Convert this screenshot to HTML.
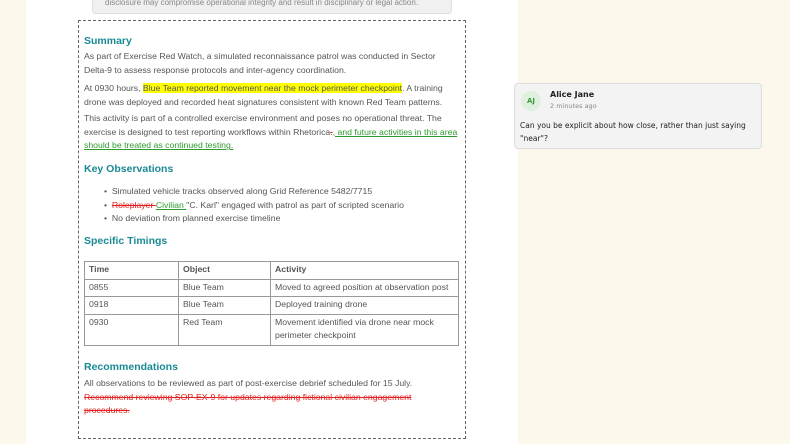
<!DOCTYPE html>
<html><head><style>
*{margin:0;padding:0;box-sizing:border-box}
body{width:790px;height:444px;background:#fdf8ec;font-family:"Liberation Sans",sans-serif;position:relative;overflow:hidden;color:#555}
.page{position:absolute;left:26px;top:0;width:492px;height:444px;background:#fff}
.top{position:absolute;left:92px;top:-14px;width:360px;height:28px;background:#f0f0f0;border:1px solid #ddd;border-radius:4px;font-size:8px;color:#888;padding:11px 12px 0}
.box{position:absolute;left:78px;top:20px;width:388px;height:419px;border:1px dashed #666}
.a{position:absolute;left:84px;font-size:8.7px;line-height:13.6px;white-space:nowrap}
h2{position:absolute;left:84px;font-size:10.5px;color:#1a8a96;font-weight:bold}
.hl{background:#ffff00}
.ins{color:#2e9a2e;text-decoration:underline}
.del{color:#e52020;text-decoration:line-through}
table{position:absolute;left:84px;top:261px;width:375px;border-collapse:collapse;font-size:8.7px}
td{border:1px solid #999;padding:1px 4px 2px;vertical-align:top;line-height:13.5px;color:#555}
.card{position:absolute;left:514px;top:83px;width:248px;height:66px;background:#f3f3f3;border:1px solid #ddd;border-radius:4px;font-family:"DejaVu Sans",sans-serif;color:#222}
.av{position:absolute;left:6px;top:7px;width:20px;height:20px;border-radius:50%;background:#dff0df;color:#3a9a3a;font-size:7px;font-weight:bold;text-align:center;line-height:20px}
</style></head><body>
<div class="page"></div>
<div class="top">disclosure may compromise operational integrity and result in disciplinary or legal action.</div>
<div class="box"></div>
<h2 style="top:35px">Summary</h2>
<div class="a" style="top:50px">As part of Exercise Red Watch, a simulated reconnaissance patrol was conducted in Sector<br>Delta-9 to assess response protocols and inter-agency coordination.</div>
<div class="a" style="top:82px">At 0930 hours, <span class="hl">Blue Team reported movement near the mock perimeter checkpoint</span>. A training<br>drone was deployed and recorded heat signatures consistent with known Red Team patterns.</div>
<div class="a" style="top:112px">This activity is part of a controlled exercise environment and poses no operational threat. The<br>exercise is designed to test reporting workflows within Rhetorica<span class="del">.</span><span class="ins">, and future activities in this area </span><br><span class="ins">should be treated as continued testing.</span></div>
<h2 style="top:163px">Key Observations</h2>
<div class="a" style="top:185px;left:104px">•&nbsp; Simulated vehicle tracks observed along Grid Reference 5482/7715<br>•&nbsp; <span class="del">Roleplayer </span><span class="ins">Civilian </span>"C. Karl" engaged with patrol as part of scripted scenario<br>•&nbsp; No deviation from planned exercise timeline</div>
<h2 style="top:235px">Specific Timings</h2>
<table>
<tr><td style="width:94px;font-weight:bold">Time</td><td style="width:92px;font-weight:bold">Object</td><td style="font-weight:bold">Activity</td></tr>
<tr><td>0855</td><td>Blue Team</td><td>Moved to agreed position at observation post</td></tr>
<tr><td>0918</td><td>Blue Team</td><td>Deployed training drone</td></tr>
<tr><td>0930</td><td>Red Team</td><td>Movement identified via drone near mock<br>perimeter checkpoint</td></tr>
</table>
<h2 style="top:361px">Recommendations</h2>
<div class="a" style="top:377px">All observations to be reviewed as part of post-exercise debrief scheduled for 15 July.<br><span class="del">Recommend reviewing SOP-EX-9 for updates regarding fictional civilian engagement </span><br><span class="del">procedures.</span></div>
<div class="card">
<div class="av">AJ</div>
<div style="position:absolute;left:35px;top:6px;font-size:8px;font-weight:bold">Alice Jane</div>
<div style="position:absolute;left:35px;top:18px;font-size:6.5px;color:#888">2 minutes ago</div>
<div style="position:absolute;left:5px;top:35px;font-size:7.5px;line-height:13px">Can you be explicit about how close, rather than just saying<br>"near"?</div>
</div>
</body></html>
